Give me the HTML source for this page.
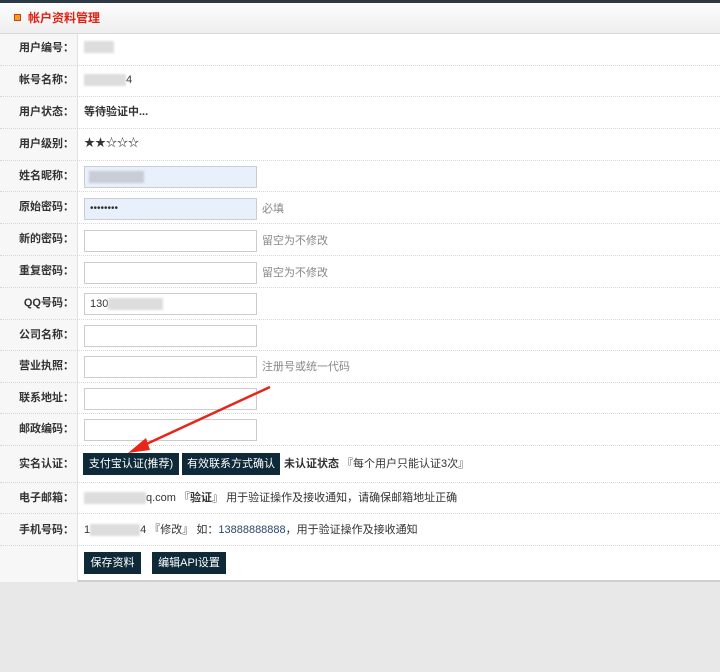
<!DOCTYPE html>
<html><head><meta charset="utf-8"><style>
*{margin:0;padding:0;box-sizing:border-box}
body{width:720px;height:672px;background:#e8e8e8;font-family:"Liberation Sans","Noto Sans CJK SC",sans-serif;font-size:11px;line-height:14px;color:#333;position:relative;overflow:hidden}
.top{position:absolute;left:0;top:0;width:720px;height:3px;background:#2b3a45}
.hd{position:absolute;left:0;top:3px;width:720px;height:31px;background:linear-gradient(#fdfdfd,#eeeeee);border-bottom:1px solid #d8d8d8}
.hd i{position:absolute;left:14px;top:11px;width:7px;height:7px;background:#f0a020;border:1px solid #d04010}
.hd span{position:absolute;left:28px;top:8px;color:#e02010;font-weight:bold;font-size:12px}
.main{position:absolute;left:0;top:34px;width:720px;height:548px;background:#fff;border-bottom:2px solid #cfcfcf}
.lc{position:absolute;left:0;top:0;width:78px;height:548px;background:#f7f7f7;border-right:1px solid #e2e2e2}
.row{position:absolute;left:0;width:720px;border-bottom:1px dotted #d6d6d6}
.row .l{position:absolute;left:0;width:74px;text-align:right;font-weight:bold;color:#333}
.row .v{position:absolute;left:84px;white-space:nowrap}
.inp{position:absolute;left:84px;width:173px;height:22px;border:1px solid #ccc;background:#fff}
.blue{background:#e8f0fe}
.hint{position:absolute;left:262px;color:#888}
.btn{position:absolute;background:#0e2a38;color:#fff;height:22px;line-height:22px;text-align:center;font-size:11px;white-space:nowrap}
.blur{display:inline-block;height:12px;background:#ddd;vertical-align:middle;filter:blur(1px)}
</style></head><body>
<div class="top"></div>
<div class="hd"><i></i><span>帐户资料管理</span></div>
<div class="main">
<div class="lc"></div>
</div>
<div style="position:absolute;top:34px;left:0;width:720px">
<div class="row" style="top:0;height:32px"><span class="l" style="top:7px">用户编号：</span><span class="v" style="top:6px"><span class="blur" style="width:30px"></span></span></div>
<div class="row" style="top:32px;height:31px"><span class="l" style="top:7px">帐号名称：</span><span class="v" style="top:7px"><span class="blur" style="width:42px"></span>4</span></div>
<div class="row" style="top:63px;height:32px"><span class="l" style="top:8px">用户状态：</span><span class="v" style="top:8px;font-weight:bold">等待验证中...</span></div>
<div class="row" style="top:95px;height:32px"><span class="l" style="top:8px">用户级别：</span><span class="v" style="top:7px">★★☆☆☆</span></div>
<div class="row" style="top:127px;height:31px"><span class="l" style="top:8px">姓名昵称：</span><div class="inp blue" style="top:5px"><span class="blur" style="width:55px;margin:4px 0 0 4px;background:#c8ccd4"></span></div></div>
<div class="row" style="top:158px;height:32px"><span class="l" style="top:8px">原始密码：</span><div class="inp blue" style="top:6px;padding:3px 5px;font-size:10px">••••••••</div><span class="hint" style="top:10px">必填</span></div>
<div class="row" style="top:190px;height:32px"><span class="l" style="top:8px">新的密码：</span><div class="inp" style="top:6px"></div><span class="hint" style="top:10px">留空为不修改</span></div>
<div class="row" style="top:222px;height:32px"><span class="l" style="top:8px">重复密码：</span><div class="inp" style="top:6px"></div><span class="hint" style="top:10px">留空为不修改</span></div>
<div class="row" style="top:254px;height:32px"><span class="l" style="top:8px">QQ号码：</span><div class="inp" style="top:5px;padding:3px 5px">130<span class="blur" style="width:55px"></span></div></div>
<div class="row" style="top:286px;height:31px"><span class="l" style="top:8px">公司名称：</span><div class="inp" style="top:5px"></div></div>
<div class="row" style="top:317px;height:32px"><span class="l" style="top:8px">营业执照：</span><div class="inp" style="top:5px"></div><span class="hint" style="top:9px">注册号或统一代码</span></div>
<div class="row" style="top:349px;height:31px"><span class="l" style="top:8px">联系地址：</span><div class="inp" style="top:5px"></div></div>
<div class="row" style="top:380px;height:32px"><span class="l" style="top:8px">邮政编码：</span><div class="inp" style="top:5px"></div></div>
<div class="row" style="top:412px;height:37px"><span class="l" style="top:11px">实名认证：</span>
<div class="btn" style="left:83px;top:7px;width:96px">支付宝认证(推荐)</div>
<div class="btn" style="left:182px;top:7px;width:98px">有效联系方式确认</div>
<span style="position:absolute;left:284px;top:11px;white-space:nowrap"><b>未认证状态</b> 『每个用户只能认证3次』</span></div>
<div class="row" style="top:449px;height:31px"><span class="l" style="top:8px">电子邮箱：</span><span class="v" style="top:8px"><span class="blur" style="width:62px"></span>q.com 『<b>验证</b>』 用于验证操作及接收通知，请确保邮箱地址正确</span></div>
<div class="row" style="top:480px;height:32px"><span class="l" style="top:9px">手机号码：</span><span class="v" style="top:9px">1<span class="blur" style="width:50px"></span>4 『修改』 如：<span style="color:#2a4a6a">13888888888</span>，用于验证操作及接收通知</span></div>
<div class="btn" style="left:84px;top:518px;width:57px">保存资料</div>
<div class="btn" style="left:152px;top:518px;width:74px">编辑API设置</div>
</div>
<svg style="position:absolute;left:0;top:0" width="720" height="672"><line x1="270" y1="387" x2="140" y2="447" stroke="#e8251a" stroke-width="2.5"/><polygon points="128,453 146,438 150,450" fill="#e8251a"/></svg>
</body></html>
